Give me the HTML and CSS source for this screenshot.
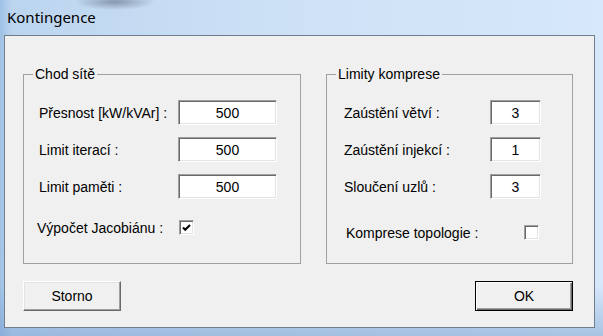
FILE: index.html
```html
<!DOCTYPE html>
<html lang="cs">
<head>
  <meta charset="UTF-8" />
  <meta name="viewport" content="width=device-width, initial-scale=1.0" />
  <link rel="stylesheet" href="styles.css">
</head>
<body>

  <div class="window">
    <div class="titlebar">Kontingence</div>

    <div class="client">
      <div class="groups">
        <fieldset class="group group-flow">
          <legend>Chod sítě</legend>
          <div class="row">
            <span class="label">Přesnost [kW/kVAr] :</span>
            <input class="field" type="text" value="500" />
          </div>
          <div class="row">
            <span class="label">Limit iterací :</span>
            <input class="field" type="text" value="500" />
          </div>
          <div class="row">
            <span class="label">Limit paměti :</span>
            <input class="field" type="text" value="500" />
          </div>
          <div class="row check-row">
            <span class="label">Výpočet Jacobiánu :</span>
            <span class="check">
              <svg width="9" height="8" viewBox="0 0 9 8">
                <path d="M1 3.5 L3.2 5.8 L8 1" fill="none" stroke="#000" stroke-width="2" />
              </svg>
            </span>
          </div>
        </fieldset>

        <fieldset class="group group-comp">
          <legend>Limity komprese</legend>
          <div class="row">
            <span class="label">Zaústění větví :</span>
            <input class="field small" type="text" value="3" />
          </div>
          <div class="row">
            <span class="label">Zaústění injekcí :</span>
            <input class="field small" type="text" value="1" />
          </div>
          <div class="row">
            <span class="label">Sloučení uzlů :</span>
            <input class="field small" type="text" value="3" />
          </div>
          <div class="row check-row">
            <span class="label">Komprese topologie :</span>
            <span class="check"></span>
          </div>
        </fieldset>
      </div>

      <div class="buttons">
        <button class="btn">Storno</button>
        <button class="btn default">OK</button>
      </div>
    </div>
  </div>

</body>
</html>
```

FILE: styles.css
```css
body {
  margin: 0;
  width: 603px;
  height: 336px;
  overflow: hidden;
  font-family: 'Liberation Sans', Arial, sans-serif;
}

.window {
  height: 336px;
  background:
    radial-gradient(ellipse 40px 8px at 115px 2px, rgba(60, 70, 90, 0.45), rgba(60, 70, 90, 0) 100%),
    linear-gradient(180deg, rgba(255, 255, 255, 0) 85%, rgba(110, 150, 200, 0.45) 100%),
    linear-gradient(90deg, #9fc1e6 0%, #bcd5ef 2%, #cde1f6 45%, #d6e8fa 100%);
}

.titlebar {
  height: 35px;
  padding-left: 7px;
  box-sizing: border-box;
  line-height: 34px;
  font-size: 15px;
  color: #000;
  font-family: 'Noto Sans', 'Liberation Sans', sans-serif;
}

.client {
  margin-left: 4px;
  width: 591px;
  height: 293px;
  box-sizing: border-box;
  border: 1px solid #6f7d8c;
  background: #f0f0f0;
  padding: 30px 21px 0 18px;
  font-size: 14px;
  color: #000;
}

.groups {
  display: flex;
  gap: 25px;
}

.group {
  margin: 0;
  box-sizing: border-box;
  height: 198px;
  border: 1px solid #a0a0a0;
  padding: 18px 0 0 15px;
}

.group-flow {
  width: 278px;
}

.group-comp {
  width: 247px;
  padding-left: 17px;
}

.group legend {
  margin-left: -6px;
  padding: 0 2px;
  line-height: 16px;
}

.group-comp legend {
  margin-left: -8px;
}

.row {
  display: flex;
  align-items: center;
  height: 25px;
  margin-bottom: 12px;
}

.group-flow .label {
  width: 139px;
}

.group-comp .label {
  width: 146px;
}

.field {
  width: 99px;
  height: 25px;
  box-sizing: border-box;
  margin: 0;
  padding: 1px 0 0;
  border: 1px solid;
  border-color: #a0a0a0 #fff #fff #a0a0a0;
  box-shadow: inset 1px 1px #696969, inset -1px -1px #e3e3e3;
  background: #fff;
  font-family: inherit;
  font-size: 14px;
  text-align: center;
  color: #000;
}

.field.small {
  width: 51px;
}

.check-row {
  margin-top: 16px;
}

.group-flow .check-row .label {
  width: 142px;
  margin-left: -2px;
}

.group-comp .check-row {
  margin-top: 21px;
}

.group-comp .check-row .label {
  width: 178px;
  margin-left: 2px;
}

.check {
  display: flex;
  align-items: center;
  justify-content: center;
  width: 15px;
  height: 15px;
  box-sizing: border-box;
  border: 1px solid;
  border-color: #a0a0a0 #fff #fff #a0a0a0;
  box-shadow: inset 1px 1px #696969, inset -1px -1px #e3e3e3;
  background: #fff;
}

.buttons {
  display: flex;
  justify-content: space-between;
  margin-top: 17px;
}

.btn {
  width: 98px;
  height: 30px;
  box-sizing: border-box;
  margin: 0;
  padding: 0;
  border: 1px solid;
  border-color: #fff #696969 #696969 #fff;
  box-shadow: inset -1px -1px #a0a0a0, inset 1px 1px #e3e3e3;
  background: #f0f0f0;
  font-family: inherit;
  font-size: 14px;
  color: #000;
}

.btn.default {
  border: 1px solid #000;
  box-shadow: inset 1px 1px #fff, inset -1px -1px #696969, inset -2px -2px #a0a0a0;
}
```
